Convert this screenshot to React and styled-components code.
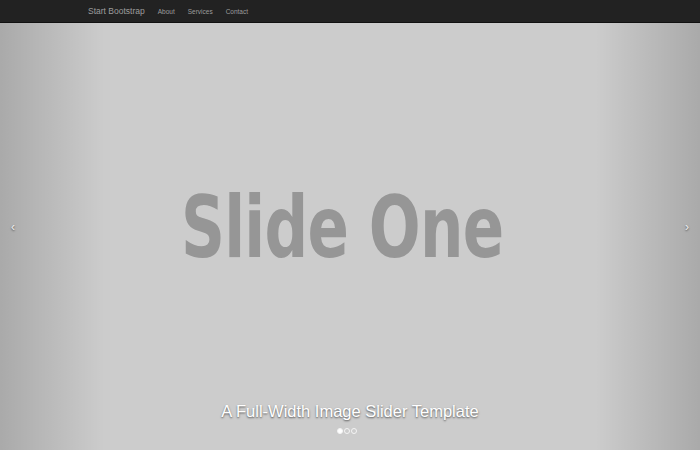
import styled, { createGlobalStyle } from 'styled-components';

const GlobalStyle = createGlobalStyle`
  html, body { margin: 0; padding: 0; height: 100%; overflow: hidden; }
  body { font-family: "Liberation Sans", Arial, sans-serif; background: #ccc; }
`;

function App() {
  return (
    <>
      <GlobalStyle />
      <Styled.Page>
        <Styled.Navbar>
          <Styled.Brand>Start Bootstrap</Styled.Brand>
          <Styled.NavLink>About</Styled.NavLink>
          <Styled.NavLink>Services</Styled.NavLink>
          <Styled.NavLink>Contact</Styled.NavLink>
        </Styled.Navbar>
        <Styled.Carousel>
          <Styled.SlideText>Slide One</Styled.SlideText>
          <Styled.Control side="left">‹</Styled.Control>
          <Styled.Control side="right">›</Styled.Control>
          <Styled.Caption>
            <Styled.CaptionText>A Full-Width Image Slider Template</Styled.CaptionText>
            <Styled.Indicators>
              <Styled.Dot active />
              <Styled.Dot />
              <Styled.Dot />
            </Styled.Indicators>
          </Styled.Caption>
        </Styled.Carousel>
      </Styled.Page>
    </>
  );
}

const Styled = {
  Page: styled.div`
    width: 700px;
    height: 450px;
    display: flex;
    flex-direction: column;
  `,
  Navbar: styled.nav`
    height: 23px;
    flex: none;
    background: #222;
    border-bottom: 1px solid #111;
    box-sizing: border-box;
    display: flex;
    align-items: center;
    padding-left: 88px;
  `,
  Brand: styled.span`
    color: #9d9d9d;
    font-size: 8.5px;
    margin-right: 13px;
  `,
  NavLink: styled.span`
    color: #9d9d9d;
    font-size: 6.5px;
    margin-right: 13px;
  `,
  Carousel: styled.div`
    flex: 1;
    position: relative;
    display: flex;
    align-items: center;
    justify-content: center;
    background: #ccc;
    padding-bottom: 20px;
    box-sizing: border-box;
  `,
  SlideText: styled.div`
    font-family: "DejaVu Sans", sans-serif;
    font-weight: bold;
    font-size: 86px;
    color: #969696;
    letter-spacing: -1px;
    margin-right: 16px;
    transform: scaleX(0.71);
  `,
  Control: styled.div`
    position: absolute;
    top: 0;
    bottom: 0;
    width: 105px;
    ${(p) => (p.side === 'left' ? 'left: 0;' : 'right: 0;')}
    background: linear-gradient(
      ${(p) => (p.side === 'left' ? 'to right' : 'to left')},
      rgba(0, 0, 0, 0.17),
      rgba(0, 0, 0, 0)
    );
    display: flex;
    align-items: center;
    justify-content: ${(p) => (p.side === 'left' ? 'flex-start' : 'flex-end')};
    padding: 0 11px 20px;
    box-sizing: border-box;
    color: #eee;
    font-size: 12px;
    text-shadow: 0 1px 2px rgba(0, 0, 0, 0.6);
  `,
  Caption: styled.div`
    position: absolute;
    left: 0;
    right: 0;
    bottom: 16px;
    display: flex;
    flex-direction: column;
    align-items: center;
    gap: 7px;
  `,
  CaptionText: styled.div`
    color: #fff;
    font-size: 16.5px;
    text-shadow: 0 1px 2px rgba(0, 0, 0, 0.6);
  `,
  Indicators: styled.div`
    display: flex;
    gap: 1px;
    margin-right: 6px;
  `,
  Dot: styled.span`
    width: 4px;
    height: 4px;
    border-radius: 50%;
    border: 1px solid #f4f4f4;
    background: ${(p) => (p.active ? '#fff' : 'transparent')};
  `,
};

export default App;
